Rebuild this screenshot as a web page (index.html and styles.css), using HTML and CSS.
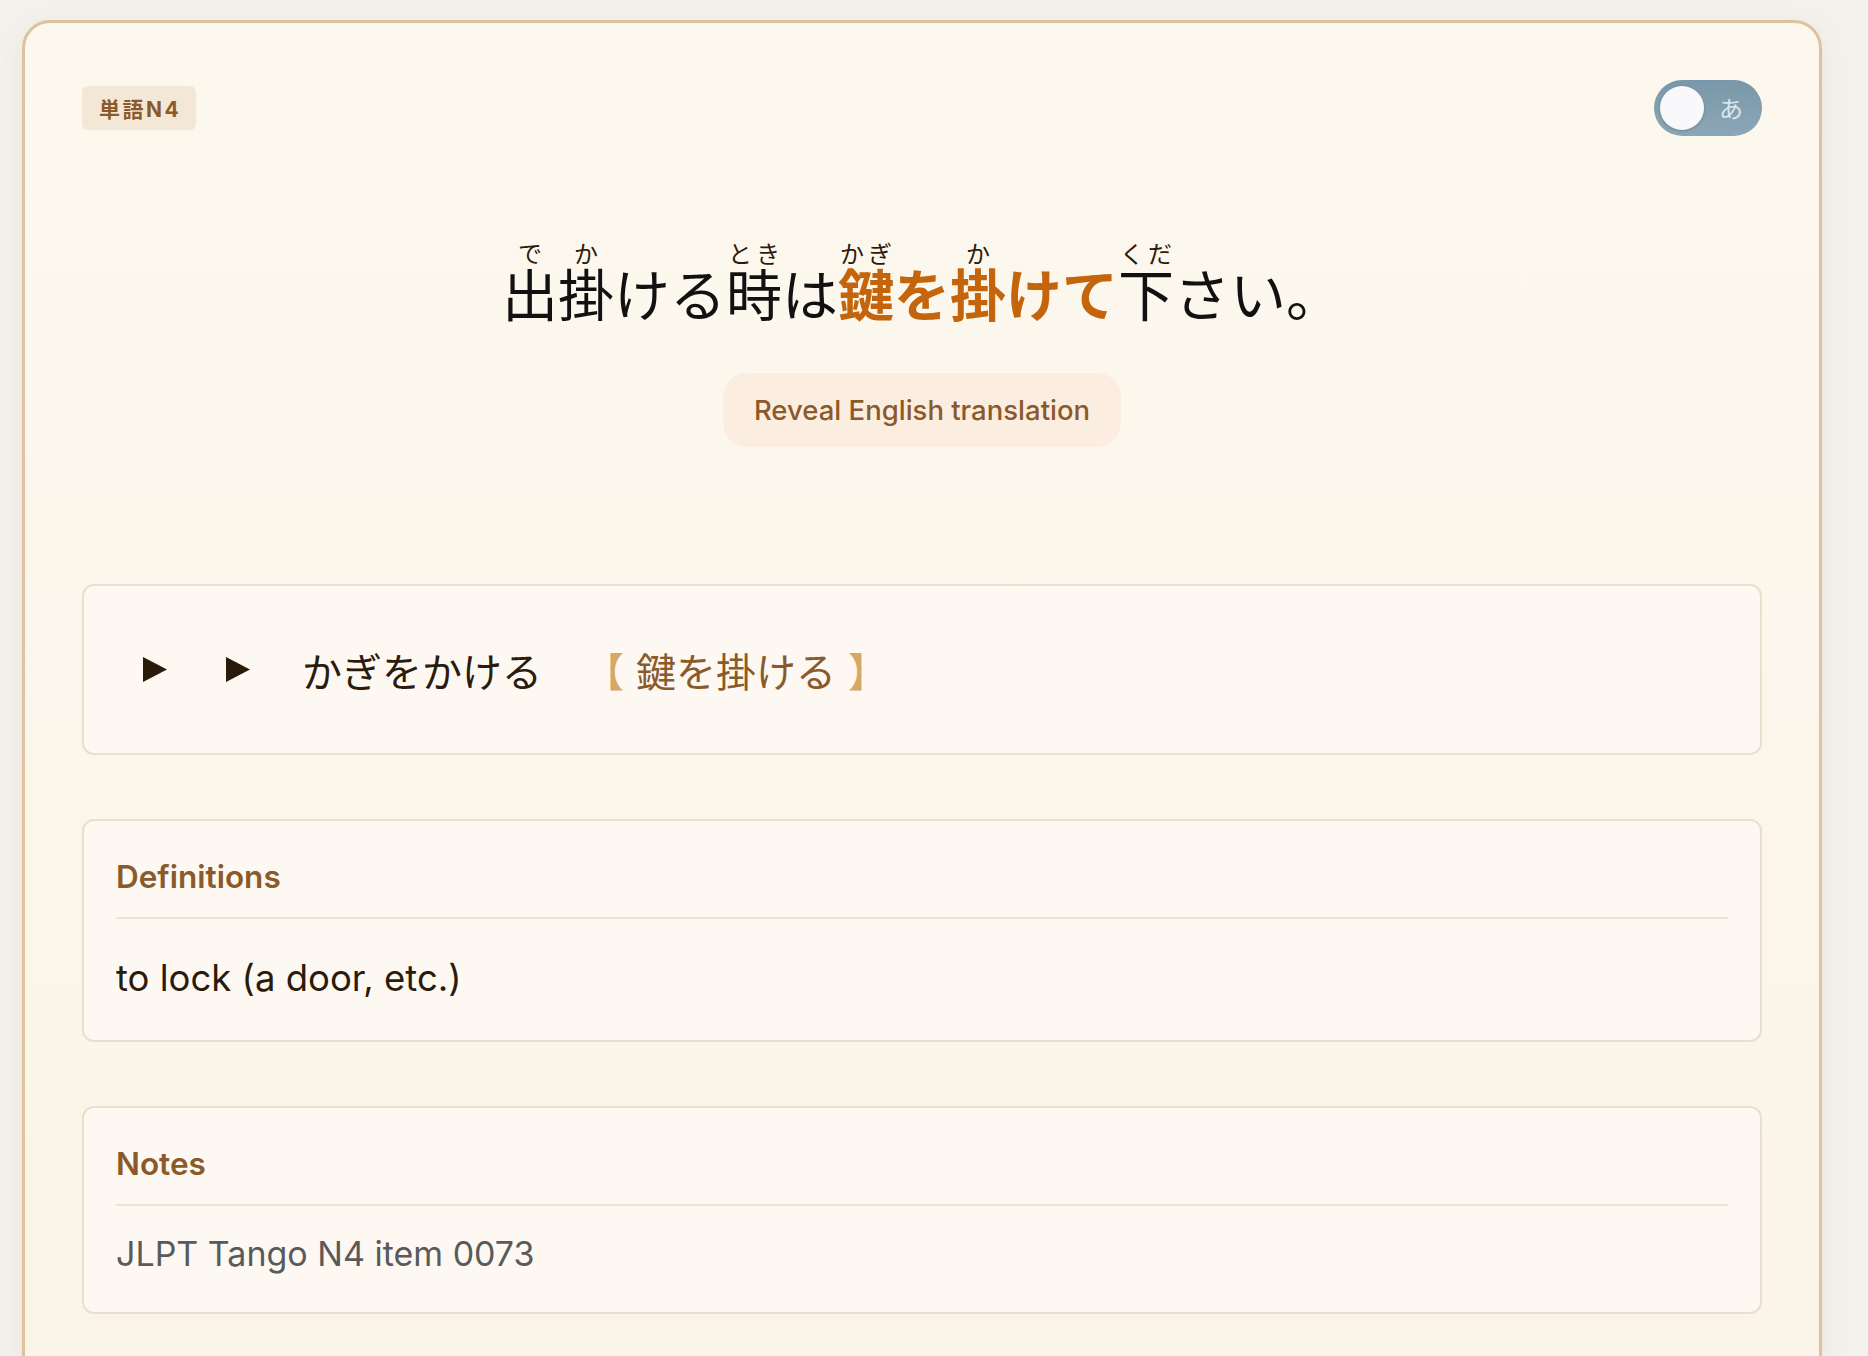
FILE: index.html
```html
<!DOCTYPE html>
<html lang="ja">
<head>
<meta charset="utf-8">
<title>単語N4</title>
<link rel="stylesheet" href="styles.css">
</head>
<body>
<div class="card">
  <div class="top-row">
    <span class="badge">単語N4</span>
    <div class="toggle"><span class="knob"></span><span class="toggle-label">あ</span></div>
  </div>

  <p class="sentence"><ruby>出<rt>で</rt></ruby><ruby>掛<rt>か</rt></ruby>ける<ruby>時<rt>とき</rt></ruby>は<span class="hl"><ruby>鍵<rt>かぎ</rt></ruby>を<ruby>掛<rt>か</rt></ruby>けて</span><ruby>下<rt>くだ</rt></ruby>さい。</p>

  <div class="reveal-wrap"><button class="reveal">Reveal English translation</button></div>

  <section class="box audio">
    <button class="play" aria-label="play"><svg width="24" height="25" viewBox="0 0 24 25"><polygon points="0,0 24,12.5 0,25"/></svg></button>
    <button class="play" aria-label="play slow"><svg width="24" height="25" viewBox="0 0 24 25"><polygon points="0,0 24,12.5 0,25"/></svg></button>
    <span class="reading">かぎをかける</span>
    <span class="kanji"><span class="br br-open">【</span>鍵を掛ける<span class="br br-close">】</span></span>
  </section>

  <section class="box info">
    <h3 class="box-head">Definitions</h3>
    <div class="box-body def">to lock (a door, etc.)</div>
  </section>

  <section class="box info">
    <h3 class="box-head">Notes</h3>
    <div class="box-body notes">JLPT Tango N4 item 0073</div>
  </section>
</div>
</body>
</html>
```

FILE: styles.css
```css
body {
  margin: 0;
  background: #f4f1ec;
  font-family: Inter, "Noto Sans CJK JP", sans-serif;
}

.card {
  margin: 20px 0 0 22px;
  width: 1800px;
  box-sizing: border-box;
  border: 3px solid #dcc29f;
  border-radius: 28px;
  background: linear-gradient(180deg, #fdf8ee 0%, #faf4e8 100%);
  padding: 57px 57px 90px;
  box-shadow: 0 6px 24px rgba(120, 90, 50, 0.08);
}

.top-row {
  display: flex;
  justify-content: space-between;
  align-items: center;
  height: 56px;
}

.badge {
  display: flex;
  align-items: center;
  height: 44px;
  padding: 0 15px 0 17px;
  background: #f3e7d6;
  border-radius: 6px;
  color: #8b5a2b;
  font-family: Inter, "Noto Sans CJK JP", sans-serif;
  font-weight: 700;
  font-size: 21px;
  letter-spacing: 2.5px;
}

.toggle {
  position: relative;
  display: flex;
  align-items: center;
  width: 108px;
  height: 56px;
  border-radius: 28px;
  background: linear-gradient(180deg, #7a97a9 0%, #8ba7b7 100%);
}

.knob {
  position: absolute;
  left: 6px;
  top: 6px;
  width: 44px;
  height: 44px;
  border-radius: 50%;
  background: #f9f9fb;
  box-shadow: 0 1px 3px rgba(0, 0, 0, 0.2);
}

.toggle-label {
  margin-left: auto;
  margin-right: 19px;
  color: #dbe7ee;
  font-family: "Noto Sans CJK JP", sans-serif;
  font-size: 24px;
  line-height: 1;
}

.sentence {
  margin: 105px 0 0;
  text-align: center;
  font-family: "Noto Sans CJK JP", sans-serif;
  font-size: 56px;
  line-height: 100px;
  color: #111;
}

.sentence rt {
  font-size: 24px;
  color: #2b1b0c;
  font-weight: 400;
}

.hl {
  color: #c4650c;
  font-weight: 700;
}

.reveal-wrap {
  display: flex;
  justify-content: center;
  margin-top: 31px;
}

.reveal {
  height: 74px;
  padding: 0 31px;
  border: none;
  border-radius: 24px;
  background: #fbeee0;
  color: #8b5a2b;
  font-family: Inter, sans-serif;
  font-weight: 500;
  font-size: 27.5px;
}

.box {
  border: 2px solid #ebdecb;
  border-radius: 12px;
  background: #fdf9f2;
}

.audio {
  margin-top: 137px;
  display: flex;
  align-items: center;
  height: 59px;
  padding: 54px 59px;
}

.play {
  display: flex;
  padding: 0;
  margin: 0 59px 0 0;
  border: none;
  background: none;
}

.play:nth-of-type(2) {
  margin-right: 52px;
}

.play svg {
  fill: #2a1a0a;
}

.reading {
  font-family: "Noto Sans CJK JP", sans-serif;
  font-size: 40px;
  color: #2b1b0c;
}

.kanji {
  margin-left: 42px;
  font-family: "Noto Sans CJK JP", sans-serif;
  font-size: 40px;
  color: #8b5a2b;
}

.br {
  color: #d6a766;
  font-weight: 500;
}

.br-open {
  margin-right: 12px;
}

.br-close {
  margin-left: 12px;
}

.info {
  margin-top: 64px;
  padding: 38px 32px 38px;
}

.box-head {
  margin: 0;
  padding-bottom: 22px;
  border-bottom: 2px solid #f0e3d1;
  color: #8b5a2b;
  font-family: Inter, sans-serif;
  font-weight: 600;
  font-size: 31.5px;
  line-height: 36px;
}

.box-body {
  font-family: Inter, sans-serif;
}

.def {
  padding-top: 35px;
  font-size: 36.5px;
  line-height: 48px;
  color: #2b1b0c;
}

.notes {
  padding-top: 28px;
  font-size: 34px;
  line-height: 40px;
  color: #5a5a5a;
}
```
